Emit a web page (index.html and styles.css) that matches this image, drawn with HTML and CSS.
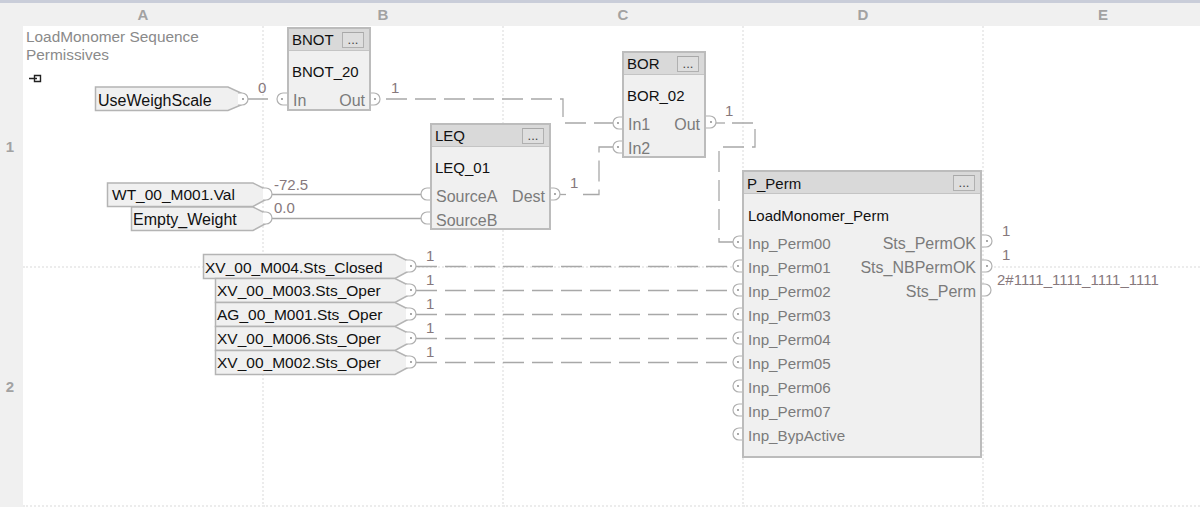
FILE: index.html
```html
<!DOCTYPE html>
<html lang="en">
<head>
<meta charset="utf-8">
<title>LoadMonomer Sequence Permissives</title>
<link rel="stylesheet" href="styles.css">
</head>
<body>
<div class="sheet">
  <div class="corner"></div>
  <div class="col-label">A</div><div class="col-label">B</div><div class="col-label">C</div><div class="col-label">D</div><div class="col-label">E</div>
  <div class="row-label">1</div>
  <div class="cell"></div><div class="cell"></div><div class="cell"></div><div class="cell"></div><div class="cell"></div>
  <div class="row-label">2</div>
  <div class="cell"></div><div class="cell"></div><div class="cell"></div><div class="cell"></div><div class="cell"></div>

  <div class="canvas">
    <svg class="wires" width="1200" height="507" viewBox="0 0 1200 507">
      <defs>
        <g id="pin-r"><path d="M0 -6H4A6 6 0 0 1 4 6H0" class="ring"/><circle cx="5" cy="0" r="0.9" class="dot"/></g>
        <g id="pin-l"><path d="M0 -6H-4A6 6 0 0 0 -4 6H0" class="ring"/><circle cx="-5" cy="0" r="0.9" class="dot"/></g>
        <g id="pin-o"><path d="M0 -6H3A6 6 0 0 1 3 6H0" class="ring"/></g>
        <g id="pin-i"><path d="M0 -6H-4A6 6 0 0 0 -4 6H0" class="ring"/></g>
      </defs>
      <!-- connector icon -->
      <path class="icon" d="M29 78.500H37M34.500 75.500H40.500V81.500H34.500Z"/>
      <!-- input/output reference tags -->
      <polygon class="tag" points="95.500,87 228,87 241,93 241,105 228,110.500 95.500,110.500"/>
      <polygon class="tag" points="107.500,183 253,183 265,189 265,200 253,206.500 107.500,206.500"/>
      <polygon class="tag" points="131.500,207 253,207 265,213 265,224 253,230.500 131.500,230.500"/>
      <polygon class="tag" points="203.500,254.500 395,254.500 407,260.500 407,272 395,278.500 203.500,278.500"/>
      <polygon class="tag" points="215.500,278.500 395,278.500 407,284.500 407,296 395,302.500 215.500,302.500"/>
      <polygon class="tag" points="215.500,302.500 395,302.500 407,308.500 407,320 395,326.500 215.500,326.500"/>
      <polygon class="tag" points="215.500,326.500 395,326.500 407,332.500 407,344 395,350.500 215.500,350.500"/>
      <polygon class="tag" points="215.500,350.500 395,350.500 407,356.500 407,368 395,374.500 215.500,374.500"/>
      <!-- solid wires -->
      <path class="wire" d="M248 99H268M272 194.500H422M272 218.500H422"/>
      <!-- dashed wires -->
      <path class="wire dash" d="M386 99H563V123H613"/>
      <path class="wire" d="M560 194.500H566"/>
      <path class="wire dash" d="M583 194.500H599V147H613"/>
      <path class="wire" d="M716 123H725"/>
      <path class="wire dash" d="M732 123H755V147H719V242H733"/>
      <path class="wire dash" d="M416 266.500H733"/>
      <path class="wire dash" d="M416 290.500H733"/>
      <path class="wire dash" d="M416 314.500H733"/>
      <path class="wire dash" d="M416 338.500H733"/>
      <path class="wire dash" d="M416 362.500H733"/>
      <!-- pins -->
      <use href="#pin-r" x="238" y="99"/>
      <use href="#pin-l" x="287" y="99"/>
      <use href="#pin-r" x="370" y="99"/>
      <use href="#pin-o" x="263" y="194"/>
      <use href="#pin-o" x="263" y="218"/>
      <use href="#pin-i" x="431" y="194"/>
      <use href="#pin-i" x="431" y="218"/>
      <use href="#pin-r" x="550" y="194"/>
      <use href="#pin-l" x="623" y="123"/>
      <use href="#pin-l" x="623" y="147"/>
      <use href="#pin-r" x="706" y="122"/>
      <use href="#pin-r" x="406" y="266"/>
      <use href="#pin-r" x="406" y="290"/>
      <use href="#pin-r" x="406" y="314"/>
      <use href="#pin-r" x="406" y="338"/>
      <use href="#pin-r" x="406" y="362"/>
      <use href="#pin-l" x="743" y="242"/>
      <use href="#pin-l" x="743" y="266"/>
      <use href="#pin-l" x="743" y="290"/>
      <use href="#pin-l" x="743" y="314"/>
      <use href="#pin-l" x="743" y="338"/>
      <use href="#pin-l" x="743" y="362"/>
      <use href="#pin-l" x="743" y="386"/>
      <use href="#pin-l" x="743" y="410"/>
      <use href="#pin-l" x="743" y="434"/>
      <use href="#pin-r" x="982" y="241"/>
      <use href="#pin-r" x="982" y="266"/>
      <use href="#pin-o" x="982" y="290"/>
    </svg>

    <div class="note">LoadMonomer Sequence<br>Permissives</div>

    <div class="tag-text wide t-use">UseWeighScale</div>
    <div class="tag-text t-wt">WT_00_M001.Val</div>
    <div class="tag-text wide t-empty">Empty_Weight</div>
    <div class="tag-text t-xv4">XV_00_M004.Sts_Closed</div>
    <div class="tag-text t-xv3">XV_00_M003.Sts_Oper</div>
    <div class="tag-text t-ag1">AG_00_M001.Sts_Oper</div>
    <div class="tag-text t-xv6">XV_00_M006.Sts_Oper</div>
    <div class="tag-text t-xv2">XV_00_M002.Sts_Oper</div>

    <div class="val v1">0</div>
    <div class="val v2">1</div>
    <div class="val v3">1</div>
    <div class="val v4">1</div>
    <div class="val v5">-72.5</div>
    <div class="val v6">0.0</div>
    <div class="val v7">1</div>
    <div class="val v8">1</div>
    <div class="val v9">1</div>
    <div class="val v10">1</div>
    <div class="val v11">1</div>
    <div class="val v12">1</div>
    <div class="val v13">1</div>
    <div class="val v14">2#1111_1111_1111_1111</div>

    <section class="block b-bnot">
      <header class="block-head"><span>BNOT</span><i class="more">...</i></header>
      <div class="block-name">BNOT_20</div>
      <div class="ports"><div class="port"><span>In</span><span>Out</span></div></div>
    </section>

    <section class="block b-bor">
      <header class="block-head"><span>BOR</span><i class="more">...</i></header>
      <div class="block-name">BOR_02</div>
      <div class="ports">
        <div class="port"><span>In1</span><span>Out</span></div>
        <div class="port"><span>In2</span></div>
      </div>
    </section>

    <section class="block b-leq">
      <header class="block-head"><span>LEQ</span><i class="more">...</i></header>
      <div class="block-name">LEQ_01</div>
      <div class="ports">
        <div class="port"><span>SourceA</span><span>Dest</span></div>
        <div class="port"><span>SourceB</span></div>
      </div>
    </section>

    <section class="block b-perm">
      <header class="block-head"><span>P_Perm</span><i class="more">...</i></header>
      <div class="block-name">LoadMonomer_Perm</div>
      <div class="ports">
        <div class="port"><span>Inp_Perm00</span><span>Sts_PermOK</span></div>
        <div class="port"><span>Inp_Perm01</span><span>Sts_NBPermOK</span></div>
        <div class="port"><span>Inp_Perm02</span><span>Sts_Perm</span></div>
        <div class="port"><span>Inp_Perm03</span></div>
        <div class="port"><span>Inp_Perm04</span></div>
        <div class="port"><span>Inp_Perm05</span></div>
        <div class="port"><span>Inp_Perm06</span></div>
        <div class="port"><span>Inp_Perm07</span></div>
        <div class="port"><span>Inp_BypActive</span></div>
      </div>
    </section>
  </div>
</div>
</body>
</html>
```
FILE: styles.css
```css
* { box-sizing: border-box; }
html, body { margin: 0; height: 507px; overflow: hidden; background: #fff; }
body { font-family: "Liberation Sans", Arial, sans-serif; }

.sheet {
  position: relative;
  width: 1200px;
  height: 507px;
  overflow: hidden;
  display: grid;
  grid-template-columns: 23px repeat(5, 240px);
  grid-template-rows: 23px 241px 239px;
  background: linear-gradient(#f0f0f0, #f0f0f0) left top / 23px 100% no-repeat #fff;
  border-top: 3px solid #c9cdd9;
}
.corner, .col-label, .row-label { background: #f0f0f0; color: #a2a2a2; font-weight: 700; font-size: 15px; display: flex; align-items: center; justify-content: center; }
.row-label { padding-right: 3px; }
.cell { margin: 0 -1px -1px 0; border-right: 2px dotted #ececec; border-bottom: 2px dotted #ececec; }

.canvas { position: absolute; left: 0; top: -3px; width: 1200px; height: 507px; }
.wires { position: absolute; left: 0; top: 0; }
.tag { fill: #f0f0f0; stroke: #b4b4b4; stroke-width: 1.5; }
.wire { fill: none; stroke: #a8a8a8; stroke-width: 1.3; }
.dash { stroke-dasharray: 21 8; }
.ring { fill: #fff; stroke: #b0b0b0; stroke-width: 1.2; }
.dot { fill: #808080; }
.icon { fill: none; stroke: #222; stroke-width: 1.4; }

.note { position: absolute; left: 26px; top: 28px; color: #8a8a8a; font-size: 15.400px; line-height: 18px; }

.tag-text { position: absolute; color: #111; font-size: 15.500px; line-height: 24px; white-space: nowrap; }
.tag-text.wide { font-size: 16px; }
.t-use { left: 98px; top: 89px; }
.t-wt { left: 112px; top: 183px; }
.t-empty { left: 133px; top: 208px; }
.t-xv4 { left: 205px; top: 256px; }
.t-xv3 { left: 217px; top: 279px; }
.t-ag1 { left: 217px; top: 303px; }
.t-xv6 { left: 217px; top: 327px; }
.t-xv2 { left: 217px; top: 351px; }

.val { position: absolute; color: #86787c; font-size: 15px; line-height: 16px; white-space: nowrap; }
.v1 { left: 258px; top: 80px; }
.v2 { left: 391px; top: 80px; }
.v3 { left: 725px; top: 103px; }
.v4 { left: 570px; top: 175px; }
.v5 { left: 274px; top: 177px; }
.v6 { left: 274px; top: 200px; }
.v7 { left: 426px; top: 248px; }
.v8 { left: 426px; top: 272px; }
.v9 { left: 426px; top: 296px; }
.v10 { left: 426px; top: 320px; }
.v11 { left: 426px; top: 344px; }
.v12 { left: 1002px; top: 223px; }
.v13 { left: 1002px; top: 247px; }
.v14 { left: 997px; top: 272px; }

.block { position: absolute; background: #f0f0f0; border: 2px solid #bcbcbc; font-size: 15px; }
.b-bnot { left: 287px; top: 27px; width: 84px; height: 84px; }
.b-bor { left: 622px; top: 51px; width: 84px; height: 107px; }
.b-leq { left: 430px; top: 123px; width: 121px; height: 107px; }
.b-perm { left: 742px; top: 170px; width: 240px; height: 288px; }

.block-head { height: 22px; background: #d9d9d9; border-bottom: 1px solid #c4c4c4; display: flex; align-items: center; justify-content: space-between; padding: 0 5px 0 3px; color: #111; }
.b-perm .block-head span { padding-top: 2px; }
.more { flex: none; width: 22px; height: 16px; border: 1px solid #b0b0b0; border-top-color: #a8a8a8; font-style: normal; font-size: 13px; line-height: 14px; text-align: center; color: #444; background: #dedede; }
.block-name { padding: 9px 3px 0; line-height: 24px; color: #111; }
.ports { margin-top: 5px; }
.port { height: 24px; line-height: 24px; padding: 0 4px; color: #7b7b7b; font-size: 16px; display: flex; justify-content: space-between; white-space: nowrap; }
.b-perm .block-name { padding: 10px 4px 0; }
.b-perm .ports { margin-top: 4px; }
.b-perm .port span:first-child { font-size: 15.200px; }
```
